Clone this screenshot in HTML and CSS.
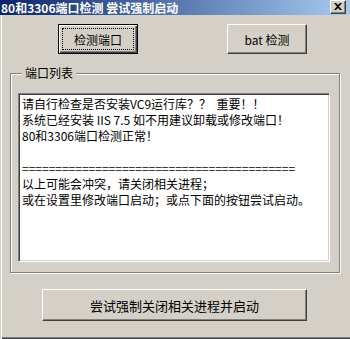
FILE: index.html
```html
<!DOCTYPE html>
<html lang="zh-CN">
<head>
    <meta charset="UTF-8">
    <title>80和3306端口检测 尝试强制启动</title>
    <link rel="stylesheet" href="styles.css">
</head>
<body>
    <div class="window">
        <div class="titlebar">
            <span class="title">80和3306端口检测 尝试强制启动</span>
            <span class="close">
                <svg width="8" height="7" viewBox="0 0 8 7"><path d="M0 0h2l2 2 2-2h2L5 3.5 8 7H6L4 5 2 7H0l3-3.5z" fill="#000"/></svg>
            </span>
        </div>
        <div class="client">
            <!-- top buttons -->
            <div class="top-buttons">
                <button class="btn btn-default"><span class="focus">检测端口</span></button>
                <button class="btn">bat 检测</button>
            </div>

            <fieldset class="group">
                <legend>端口列表</legend>
                <div class="textbox">请自行检查是否安装VC9运行库？？  重要！！
系统已经安装 IIS 7.5 如不用建议卸载或修改端口！
80和3306端口检测正常！

=========================================
以上可能会冲突，请关闭相关进程；
或在设置里修改端口启动；或点下面的按钮尝试启动。</div>
            </fieldset>

            <div class="bottom-row">
                <button class="btn btn-wide">尝试强制关闭相关进程并启动</button>
            </div>
        </div>
    </div>
</body>
</html>
```

FILE: styles.css
```css
body {
    margin: 0;
    padding: 0;
    font-family: "Noto Sans CJK SC", sans-serif;
    font-size: 12px;
}

.window {
    width: 350px;
    height: 339px;
    display: flex;
    flex-direction: column;
    background-color: #d4d0c8;
}

.titlebar {
    height: 15px;
    display: flex;
    align-items: center;
    justify-content: space-between;
    padding: 0 4px 0 1px;
    background: linear-gradient(to right, #0a246a, #a6caf0);
    color: #fff;
    font-weight: bold;
    line-height: 15px;
}

.close {
    width: 14px;
    height: 12px;
    display: flex;
    justify-content: center;
    align-items: center;
    margin-top: -2px;
    background-color: #d4d0c8;
    border: 1px solid;
    border-color: #fff #404040 #404040 #fff;
    box-shadow: inset -1px -1px #808080;
}

.client {
    flex: 1;
    display: flex;
    flex-direction: column;
    box-shadow: inset 1px 0 #d4d0c8, inset 2px 0 #fff, inset 0 -1px #404040, inset 0 -2px #808080;
}

.top-buttons {
    display: flex;
    gap: 89px;
    margin-top: 9px;
    padding-left: 58px;
}

.btn {
    width: 80px;
    height: 30px;
    padding: 0;
    font-family: inherit;
    font-size: 12px;
    color: #000;
    background-color: #d4d0c8;
    border: 1px solid;
    border-color: #fff #404040 #404040 #fff;
    box-shadow: inset -1px -1px #808080;
}

.btn-default {
    padding: 3px;
    border-color: #000;
    box-shadow: inset 1px 1px #fff, inset -1px -1px #404040, inset -2px -2px #808080;
}

.focus {
    height: 100%;
    display: flex;
    justify-content: center;
    align-items: center;
    box-sizing: border-box;
    border: 1px dotted #000;
}

.group {
    margin: 12px 10px 0;
    padding: 13px 9px 10px 7px;
    border: 1px solid #808080;
    box-shadow: inset 1px 1px #fff, 1px 1px #fff;
}

.group legend {
    margin-left: 4px;
    padding: 0 3px;
    line-height: 14px;
    background-color: #d4d0c8;
}

.textbox {
    height: 163px;
    padding: 2px 3px;
    background-color: #fff;
    border: 1px solid;
    border-color: #808080 #fff #fff #808080;
    box-shadow: inset 1px 1px #404040, inset -1px -1px #d4d0c8;
    line-height: 16px;
    white-space: pre-wrap;
    overflow: hidden;
}

.bottom-row {
    margin-top: 16px;
    padding-left: 42px;
}

.btn-wide {
    width: 265px;
    height: 32px;
    font-size: 13px;
}
```
